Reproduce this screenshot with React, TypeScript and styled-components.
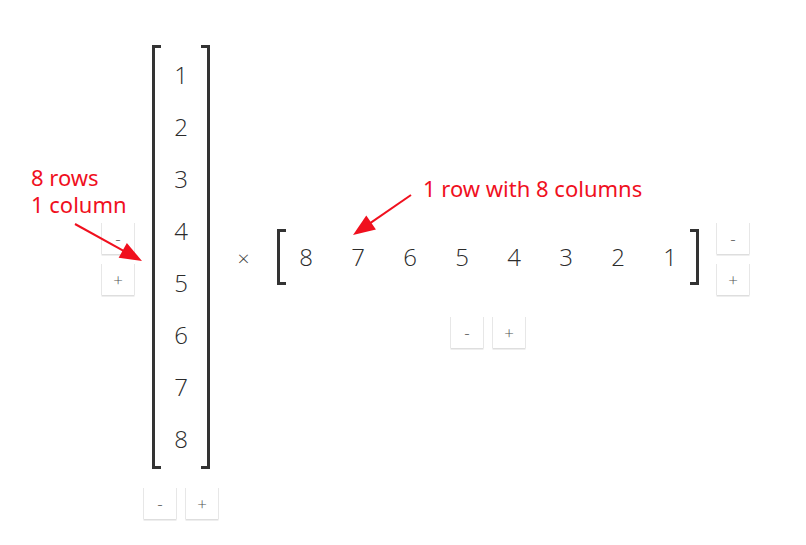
import React from "react";
import styled, { createGlobalStyle } from "styled-components";

const GlobalStyle = createGlobalStyle`
  html, body { margin: 0; padding: 0; background: #ffffff; }
  body { font-family: "Noto Sans", "DejaVu Sans", sans-serif; color: #333; }
`;

const Page = styled.div`
  position: relative;
  width: 806px;
  height: 545px;
  box-sizing: border-box;
  padding: 45px 0 0 101px;
  overflow: hidden;
`;

const Layout = styled.div`
  display: grid;
  grid-template-columns: 51px 58px 67px max-content;
  grid-template-rows: auto auto;
  align-items: center;
`;

const Stack = styled.div<{ $col?: number; $row?: number }>`
  display: flex;
  flex-direction: column;
  gap: 10px;
  grid-column: ${(p) => p.$col ?? 1};
  grid-row: ${(p) => p.$row ?? 1};
  align-self: center;
  justify-self: start;
  margin-top: 3px;
`;

const ButtonRow = styled.div<{ $top?: number }>`
  display: flex;
  gap: 8px;
  justify-self: center;
  align-self: start;
  margin-top: ${(p) => p.$top ?? 0}px;
`;

const Btn = styled.button`
  width: 34px;
  height: 31px;
  padding: 0;
  border: none;
  background: #fff;
  box-shadow: inset 1px 0 0 #e7e7e7, inset -1px 0 0 #e7e7e7, 0 2px 0 -0.5px #dedede;
  font-family: "Open Sans", "Noto Sans", sans-serif;
  font-weight: 300;
  font-size: 17px;
  color: #555;
  line-height: 1;
  display: flex;
  align-items: center;
  justify-content: center;
  cursor: pointer;
`;

const Matrix = styled.div<{ $cols: number }>`
  position: relative;
  display: grid;
  grid-template-columns: repeat(${(p) => p.$cols}, 52px);
  grid-auto-rows: 52px;
  padding: 2px 3px;
  &::before,
  &::after {
    content: "";
    position: absolute;
    top: 0;
    bottom: 0;
    width: 6px;
    border: 3px solid #333;
  }
  &::before {
    left: 0;
    border-right: none;
  }
  &::after {
    right: 0;
    border-left: none;
  }
`;

const LeftMatrix = styled(Matrix)`
  grid-column: 2;
  grid-row: 1;
  padding: 4px 3px;
`;

const Cell = styled.div`
  display: flex;
  align-items: center;
  justify-content: center;
  font-family: "Open Sans", "Noto Sans", sans-serif;
  font-weight: 300;
  font-size: 24px;
  line-height: 1;
  color: #2b2b2b;
`;

const Times = styled.div`
  grid-column: 3;
  grid-row: 1;
  justify-self: center;
  font-family: "Open Sans", "Noto Sans", sans-serif;
  font-weight: 300;
  font-size: 21px;
  color: #444;
  padding-top: 2px;
`;

const RightGroup = styled.div`
  grid-column: 4;
  grid-row: 1;
  align-self: stretch;
  display: grid;
  grid-template-columns: max-content 34px;
  grid-template-rows: 1fr auto 1fr;
  column-gap: 17px;
`;

const RightMatrixSlot = styled.div`
  grid-column: 1;
  grid-row: 2;
  align-self: center;
`;

const Note = styled.div<{ $x: number; $y: number }>`
  position: absolute;
  left: ${(p) => p.$x}px;
  top: ${(p) => p.$y}px;
  display: flex;
  flex-direction: column;
  gap: 5px;
  font-family: "Noto Sans", "DejaVu Sans", sans-serif;
  font-size: 22px;
  line-height: 22px;
  color: #f0101e;
  white-space: nowrap;
`;

const Overlay = styled.svg`
  position: absolute;
  left: 0;
  top: 0;
  pointer-events: none;
`;

const LeftButtons = styled(ButtonRow)`
  grid-column: 2;
  grid-row: 2;
`;

const RightButtons = styled(ButtonRow)`
  grid-column: 1;
  grid-row: 3;
`;

const Arrow = ({ x1, y1, x2, y2 }: { x1: number; y1: number; x2: number; y2: number }) => {
  const dx = x2 - x1;
  const dy = y2 - y1;
  const len = Math.hypot(dx, dy);
  const ux = dx / len;
  const uy = dy / len;
  const hl = 22;
  const hw = 8.5;
  const bx = x2 - ux * hl;
  const by = y2 - uy * hl;
  const nx = -uy;
  const ny = ux;
  const pts = `${x2},${y2} ${bx + nx * hw},${by + ny * hw} ${bx - nx * hw},${by - ny * hw}`;
  return (
    <g>
      <line x1={x1} y1={y1} x2={bx + ux * 2} y2={by + uy * 2} stroke="#f0101e" strokeWidth={2} />
      <polygon points={pts} fill="#f0101e" />
    </g>
  );
};

export default function App() {
  const left = [1, 2, 3, 4, 5, 6, 7, 8];
  const right = [8, 7, 6, 5, 4, 3, 2, 1];
  return (
    <>
      <GlobalStyle />
      <Page>
        <Layout>
          <Stack $col={1} $row={1}>
            <Btn>-</Btn>
            <Btn>+</Btn>
          </Stack>
          <LeftMatrix $cols={1}>
            {left.map((n) => (
              <Cell key={n}>{n}</Cell>
            ))}
          </LeftMatrix>
          <Times>×</Times>
          <RightGroup>
            <RightMatrixSlot>
              <Matrix $cols={8}>
                {right.map((n) => (
                  <Cell key={n}>{n}</Cell>
                ))}
              </Matrix>
            </RightMatrixSlot>
            <Stack $col={2} $row={2}>
              <Btn>-</Btn>
              <Btn>+</Btn>
            </Stack>
            <RightButtons $top={22}>
              <Btn>-</Btn>
              <Btn>+</Btn>
            </RightButtons>
          </RightGroup>
          <LeftButtons $top={19}>
            <Btn>-</Btn>
            <Btn>+</Btn>
          </LeftButtons>
        </Layout>
        <Note $x={31} $y={166}>
          <span>8 rows</span>
          <span>1 column</span>
        </Note>
        <Note $x={423} $y={177}>
          <span>1 row with 8 columns</span>
        </Note>
        <Overlay width={806} height={545} viewBox="0 0 806 545">
          <Arrow x1={75} y1={224} x2={142} y2={261} />
          <Arrow x1={411} y1={195} x2={353} y2={235} />
        </Overlay>
      </Page>
    </>
  );
}
